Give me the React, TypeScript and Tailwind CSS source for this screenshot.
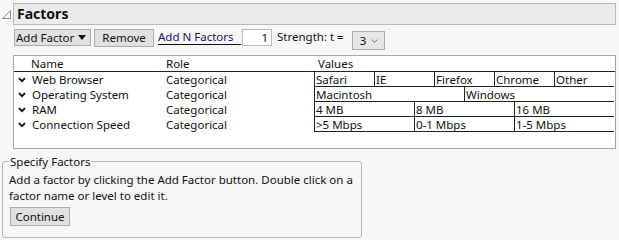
// JMP-style "Factors" panel: outline header, toolbar, factor table, hint group.
const FACTORS = [
  { name: "Web Browser", role: "Categorical", values: ["Safari", "IE", "Firefox", "Chrome", "Other"] },
  { name: "Operating System", role: "Categorical", values: ["Macintosh", "Windows"] },
  { name: "RAM", role: "Categorical", values: ["4 MB", "8 MB", "16 MB"] },
  { name: "Connection Speed", role: "Categorical", values: [">5 Mbps", "0-1 Mbps", "1-5 Mbps"] },
];

function Chevron() {
  return (
    <svg width="8" height="6" viewBox="0 0 8 6" className="shrink-0">
      <path d="M1 1.2 L4 4.2 L7 1.2" fill="none" stroke="#111" strokeWidth="1.9" />
    </svg>
  );
}

export default function App() {
  return (
    <div
      className="relative h-[240px] w-[619px] overflow-hidden bg-[#f7f7f7] text-[11.5px] leading-[15px] text-[#111]"
      style={{ fontFamily: '"Noto Sans", "Open Sans", sans-serif' }}
    >
      {/* outline header */}
      <div className="flex items-stretch pt-[3px] pr-[3px]">
        <div className="flex w-[13px] items-center justify-center">
          <svg width="9" height="9" viewBox="0 0 9 9">
            <path d="M8.5 0.5 L8.5 8.5 L0.5 8.5 Z" fill="none" stroke="#8a8a8a" strokeWidth="1" />
          </svg>
        </div>
        <div className="flex h-[22px] flex-1 items-center border border-[#b9b9b9] bg-[#ebebeb] pl-[3px]">
          <span className="text-[14px] font-bold leading-none">Factors</span>
        </div>
      </div>

      {/* toolbar */}
      <div className="mt-[4px] flex items-start whitespace-nowrap pl-[14px]">
        <button className="flex h-[17px] w-[77px] items-center gap-[4px] border border-[#adadad] bg-[#e1e1e1] pl-[1px] text-[11.5px] leading-none">
          <span>Add Factor</span>
          <svg width="8" height="5" viewBox="0 0 8 5">
            <path d="M0 0 H8 L4 5 Z" fill="#111" />
          </svg>
        </button>
        <button className="ml-[3px] h-[18px] w-[60px] border border-[#adadad] bg-[#e1e1e1] text-[11.5px] leading-none">
          Remove
        </button>
        <div className="ml-[4px] mt-[1px] w-[83px] border-b border-[#111] text-[11.5px] leading-[14px] text-[#16165e]">
          Add N Factors
        </div>
        <div className="ml-[1px] h-[17px] w-[30px] border border-[#b9b9b9] bg-white pr-[3px] text-right text-[11.5px] leading-[15px]">
          1
        </div>
        <span className="ml-[5px] text-[11.5px] leading-[15px]">Strength: t =</span>
        <div className="ml-[8px] mt-[2px] flex h-[19px] w-[33px] items-center justify-between border border-[#adadad] bg-[#e6e6e6] pl-[7px] pr-[6px]">
          <span>3</span>
          <svg width="7" height="4" viewBox="0 0 7 4">
            <path d="M0.5 0.5 L3.5 3.5 L6.5 0.5" fill="none" stroke="#777" strokeWidth="1" />
          </svg>
        </div>
      </div>

      {/* factor table */}
      <div className="ml-[13px] mt-[5px] h-[94px] w-[603px] border border-[#a6a6a6] bg-white">
        <div className="flex h-[16px] border-b border-[#222] leading-[15px]">
          <span className="ml-[17px] w-[135px]">Name</span>
          <span className="w-[152px]">Role</span>
          <span>Values</span>
        </div>
        {FACTORS.map((f) => (
          <div key={f.name} className="flex h-[15px] whitespace-nowrap leading-[15px]">
            <div className="ml-[4px] flex w-[148px] items-center gap-[6px]">
              <Chevron />
              <span>{f.name}</span>
            </div>
            <span className="w-[148px]">{f.role}</span>
            <div className="flex w-[300px] border-b border-l border-[#222]">
              {f.values.map((v, i) => (
                <span
                  key={v}
                  className={`flex-1 pl-[1px] leading-[15px] ${i > 0 ? "border-l border-[#222]" : ""}`}
                >
                  {v}
                </span>
              ))}
            </div>
          </div>
        ))}
      </div>

      {/* hint group */}
      <div className="relative ml-[2px] mt-[12px] h-[77px] w-[360px] rounded-[3px] border border-[#b9b9b9] px-[6px] pt-[10px]">
        <span className="absolute -top-[8px] left-[6px] bg-[#f7f7f7] px-[1px] leading-[15px]">Specify Factors</span>
        <p className="leading-[16px]">
          Add a factor by clicking the Add Factor button. Double click on a factor name or level to edit it.
        </p>
        <button className="ml-[1px] mt-[3px] h-[19px] w-[60px] border border-[#adadad] bg-[#e1e1e1] text-[11.5px] leading-none">
          Continue
        </button>
      </div>
    </div>
  );
}
